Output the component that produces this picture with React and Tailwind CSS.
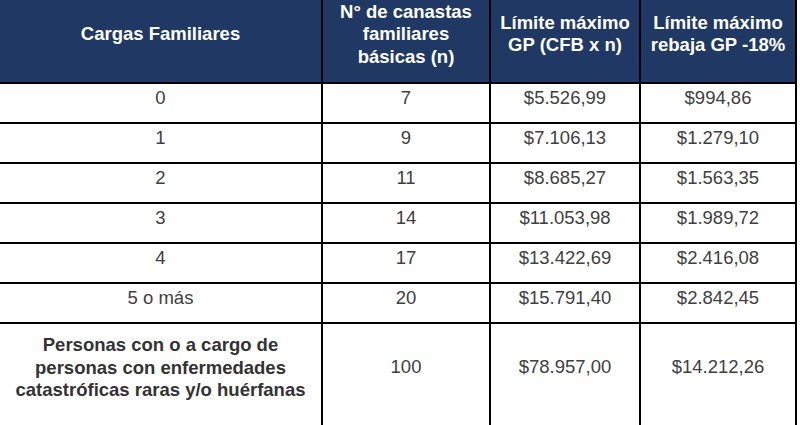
import React from "react";

const rows = [
  ["0", "7", "$5.526,99", "$994,86"],
  ["1", "9", "$7.106,13", "$1.279,10"],
  ["2", "11", "$8.685,27", "$1.563,35"],
  ["3", "14", "$11.053,98", "$1.989,72"],
  ["4", "17", "$13.422,69", "$2.416,08"],
  ["5 o más", "20", "$15.791,40", "$2.842,45"],
];

const cols = "grid grid-cols-[323px_168px_150px_156px]";

export default function App() {
  return (
    <div className="w-[800px] h-[425px] overflow-hidden bg-white font-['Liberation_Sans',Arial,sans-serif] text-[18.5px] leading-[22.5px]">
      <div className="w-[797px]">
        {/* Encabezado */}
        <div className={`${cols} h-[84px] bg-[#1f3864] text-white font-bold text-center`}>
          <div className="flex items-center justify-center border-r-2 border-b-2 border-black pb-[14px]">
            Cargas Familiares
          </div>
          <div className="flex items-center justify-center border-r-2 border-b-2 border-black pb-[13px]">
            N° de canastas
            <br />
            familiares
            <br />
            básicas (n)
          </div>
          <div className="flex items-center justify-center border-r-2 border-b-2 border-black pb-[14px]">
            Límite máximo
            <br />
            GP (CFB x n)
          </div>
          <div className="flex items-center justify-center border-r-2 border-b-2 border-black pb-[14px]">
            Límite máximo
            <br />
            rebaja GP -18%
          </div>
        </div>

        {/* Filas */}
        {rows.map((r, i) => (
          <div key={i} className={`${cols} h-[40px] text-[#404040] text-center`}>
            {r.map((c, j) => (
              <div key={j} className="border-r-2 border-b-2 border-black pt-[3px]">
                {c}
              </div>
            ))}
          </div>
        ))}

        {/* Fila final */}
        <div className={`${cols} h-[120px] text-[#404040] text-center`}>
          <div className="border-r-2 border-black pt-[10px] font-bold text-[#333]">
            Personas con o a cargo de
            <br />
            personas con enfermedades
            <br />
            catastróficas raras y/o huérfanas
          </div>
          <div className="border-r-2 border-black pt-[32px]">100</div>
          <div className="border-r-2 border-black pt-[32px]">$78.957,00</div>
          <div className="border-r-2 border-black pt-[32px]">$14.212,26</div>
        </div>
      </div>
    </div>
  );
}
